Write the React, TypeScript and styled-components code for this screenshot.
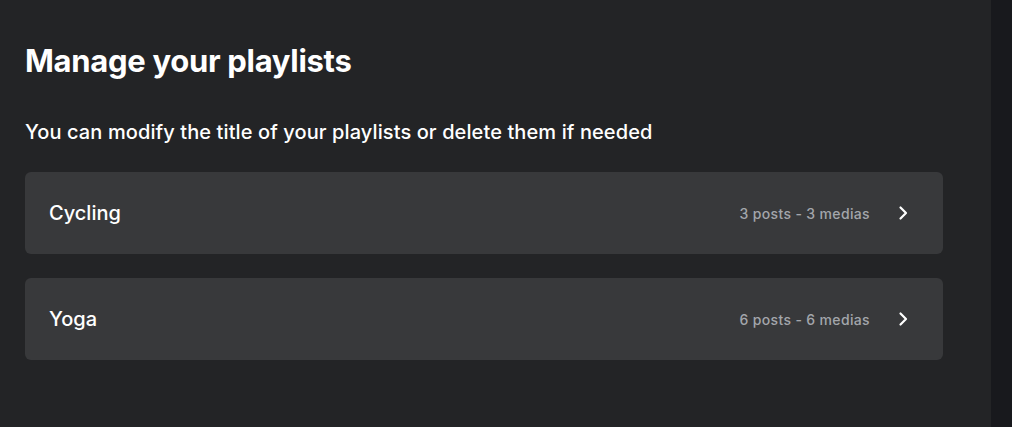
import React from 'react';
import styled, { createGlobalStyle } from 'styled-components';

const GlobalStyle = createGlobalStyle`
  html, body {
    margin: 0;
    padding: 0;
    background: #18191d;
  }
  * {
    box-sizing: border-box;
  }
`;

const playlists = [
  { id: 1, title: 'Cycling', posts: 3, medias: 3 },
  { id: 2, title: 'Yoga', posts: 6, medias: 6 },
];

const Chevron = () => (
  <svg width="16" height="16" viewBox="0 0 16 16" fill="none">
    <path
      d="M5.5 2.5L11 8L5.5 13.5"
      stroke="#ffffff"
      strokeWidth="2.2"
      strokeLinecap="round"
      strokeLinejoin="round"
    />
  </svg>
);

const App = () => {
  return (
    <>
      <GlobalStyle />
      <PageDiv>
        <MainSection>
          <Title>Manage your playlists</Title>
          <Subtitle>
            You can modify the title of your playlists or delete them if needed
          </Subtitle>
          <ListUl>
            {playlists.map((p) => (
              <CardLi key={p.id}>
                <CardTitle>{p.title}</CardTitle>
                <CardRight>
                  <Meta>
                    {p.posts} posts - {p.medias} medias
                  </Meta>
                  <Chevron />
                </CardRight>
              </CardLi>
            ))}
          </ListUl>
        </MainSection>
        <SideStrip />
      </PageDiv>
    </>
  );
};

export default App;

const PageDiv = styled.div`
  display: flex;
  width: 100%;
  height: 427px;
  font-family: Inter, 'Noto Sans', sans-serif;
`;

const MainSection = styled.main`
  width: 991px;
  flex-shrink: 0;
  background: #232426;
  padding: 40px 48px 0 25px;
`;

const SideStrip = styled.div`
  flex: 1;
  background: #18191d;
`;

const Title = styled.h1`
  margin: 0;
  font-size: 31px;
  font-weight: 700;
  color: #ffffff;
  line-height: 42px;
  letter-spacing: -0.3px;
`;

const Subtitle = styled.p`
  margin: 37px 0 0;
  font-size: 20px;
  font-weight: 500;
  color: #ffffff;
  line-height: 26px;
  letter-spacing: 0.1px;
`;

const ListUl = styled.ul`
  list-style: none;
  margin: 27px 0 0;
  padding: 0;
  display: flex;
  flex-direction: column;
  gap: 24px;
`;

const CardLi = styled.li`
  height: 82px;
  background: #38393b;
  border-radius: 6px;
  padding: 0 32px 0 24px;
  display: flex;
  align-items: center;
  justify-content: space-between;
  cursor: pointer;
`;

const CardTitle = styled.span`
  font-size: 20px;
  font-weight: 500;
  color: #ffffff;
`;

const CardRight = styled.div`
  display: flex;
  align-items: center;
  gap: 25px;
`;

const Meta = styled.span`
  font-size: 14px;
  font-weight: 500;
  color: #a3a6ab;
  letter-spacing: 0.35px;
`;
